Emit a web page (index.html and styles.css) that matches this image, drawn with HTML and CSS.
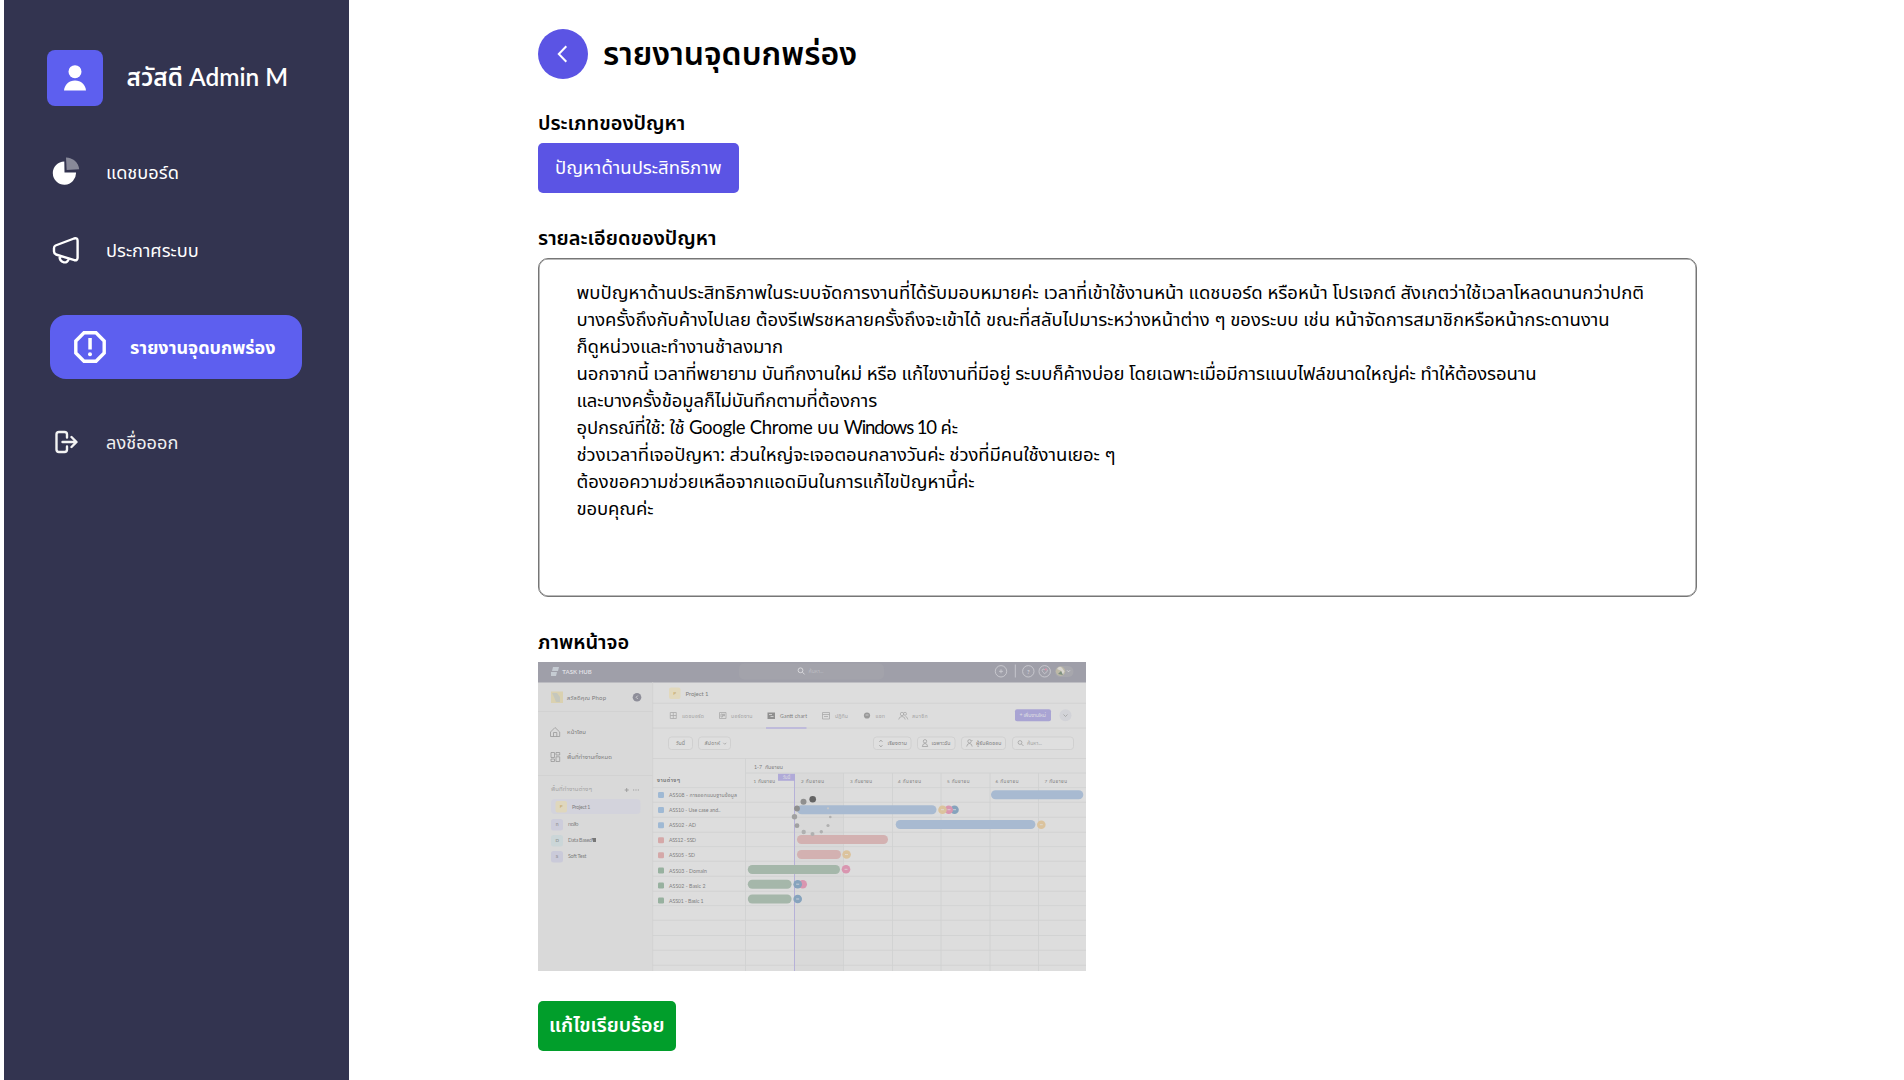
FILE: index.html
```html
<!DOCTYPE html>
<html lang="th">
<head>
<meta charset="utf-8">
<title>รายงานจุดบกพร่อง</title>
<link rel="stylesheet" href="styles.css">
</head>
<body>
<div class="app">
  <aside class="sidebar">
    <div class="profile">
      <span class="avatar"><svg width="22" height="26" viewBox="0 0 22 26"><circle cx="11" cy="6.700" r="6.500" fill="#fff"/><path d="M0 25.500C.6 19.500 5 15.500 11 15.500s10.400 4 11 10z" fill="#fff"/></svg></span>
      <span class="greeting">สวัสดี Admin M</span>
    </div>
    <nav class="menu">
      <a class="item dashboard"><svg class="icon" width="28" height="28" viewBox="0 0 28 28"><path d="M12.300 4.500A11.600 11.600 0 1 0 24 15.600l-11.500-.2z" fill="#fff"/><path d="M14 .6C20.700.8 26.500 5.500 27.200 12.200l-12.500.8z" fill="#fff" opacity=".42"/></svg><span>แดชบอร์ด</span></a>
      <a class="item announce"><svg class="icon" width="28" height="28" viewBox="0 0 28 28" fill="none" stroke="#fff" stroke-width="2.400" stroke-linejoin="round"><path d="M3.500 9.500 22 2.500q3.600-1 3.600 2.200v17.200q-.3 2.900-3.200 2.300L4 18.500Q2 17.500 2 15.500v-3.300q0-2 1.500-2.700zM7.500 19.800c0 8 8.500 8.500 9.200 2.800"/></svg><span>ประกาศระบบ</span></a>
      <a class="item active"><svg class="icon" width="32" height="32" viewBox="0 0 32 32"><path d="M10 1.800h12l8.200 8.200v12L22 30.200H10L1.800 22V10z" fill="none" stroke="#fff" stroke-width="3.400"/><path d="M14.300 7h3.500v11.500h-3.500z" fill="#fff"/><circle cx="16" cy="23.300" r="2" fill="#fff"/></svg><span>รายงานจุดบกพร่อง</span></a>
      <a class="item logout"><svg class="icon" width="24" height="24" viewBox="0 0 24 24" fill="none" stroke="#f3f3f3" stroke-width="2.400" stroke-linecap="round" stroke-linejoin="round"><path d="M13 7.500V4.500Q13 2 10.500 2H5Q2.500 2 2.500 4.500v15Q2.500 22 5 22h5.500q2.500 0 2.500-2.500v-3M8.500 12H22M17.500 7l5 5-5 5"/></svg><span>ลงชื่อออก</span></a>
    </nav>
  </aside>
  <main class="content">
    <header class="head">
      <a class="back"><svg width="50" height="50" viewBox="0 0 50 50"><path d="M28.300 17.200 20.800 25l7.500 7.800" fill="none" stroke="#fff" stroke-width="2"/></svg></a>
      <h1 class="title">รายงานจุดบกพร่อง</h1>
    </header>
    <h2 class="label label-type">ประเภทของปัญหา</h2>
    <div class="tag">ปัญหาด้านประสิทธิภาพ</div>
    <h2 class="label">รายละเอียดของปัญหา</h2>
    <div class="detail">
      <p class="line">พบปัญหาด้านประสิทธิภาพในระบบจัดการงานที่ได้รับมอบหมายค่ะ เวลาที่เข้าใช้งานหน้า แดชบอร์ด หรือหน้า โปรเจกต์ สังเกตว่าใช้เวลาโหลดนานกว่าปกติ</p>
      <p class="line">บางครั้งถึงกับค้างไปเลย ต้องรีเฟรชหลายครั้งถึงจะเข้าได้ ขณะที่สลับไปมาระหว่างหน้าต่าง ๆ ของระบบ เช่น หน้าจัดการสมาชิกหรือหน้ากระดานงาน</p>
      <p class="line">ก็ดูหน่วงและทำงานช้าลงมาก</p>
      <p class="line tight">นอกจากนี้ เวลาที่พยายาม บันทึกงานใหม่ หรือ แก้ไขงานที่มีอยู่ ระบบก็ค้างบ่อย โดยเฉพาะเมื่อมีการแนบไฟล์ขนาดใหญ่ค่ะ ทำให้ต้องรอนาน</p>
      <p class="line tight">และบางครั้งข้อมูลก็ไม่บันทึกตามที่ต้องการ</p>
      <p class="line device">อุปกรณ์ที่ใช้: ใช้ <span class="browser">Google Chrome</span> บน <span class="os">Windows 10</span> ค่ะ</p>
      <p class="line snug">ช่วงเวลาที่เจอปัญหา: ส่วนใหญ่จะเจอตอนกลางวันค่ะ ช่วงที่มีคนใช้งานเยอะ ๆ</p>
      <p class="line snug">ต้องขอความช่วยเหลือจากแอดมินในการแก้ไขปัญหานี้ค่ะ</p>
      <p class="line tight">ขอบคุณค่ะ</p>
    </div>
    <h2 class="label">ภาพหน้าจอ</h2>
    <svg class="shot" width="548" height="309" viewBox="0 0 548 309">
      <rect width="548" height="309" fill="#ddd"/>
      <rect y="20" width="114.700" height="289" fill="#d9d9d9"/>
      <rect width="548" height="20.500" fill="#9f9fa9"/>
      <!-- top bar -->
      <path d="M15 5h6l-1 4h-6zM13 10h6l-1 4h-5z" fill="#c5cbd2"/>
      <text x="24.300" y="12" textLength="29.500" class="s6 lt md">TASK HUB</text>
      <rect x="201" y="1.500" width="145" height="16" rx="5" fill="#a3a3ab"/>
      <g fill="none" stroke="#dcdce0" stroke-width=".9"><circle cx="262.500" cy="8.300" r="2.400"/><path d="m264.500 10.200 2 2.200"/></g>
      <text x="270.500" y="11" textLength="15" class="s5 lt dim">ค้นหา...</text>
      <g fill="none" stroke="#d0d0d6" stroke-width=".8"><circle cx="463" cy="9.300" r="5.700"/><path d="M461 9.300h4M463 7.300v4M477.300 2.500v13"/><circle cx="490.300" cy="9.300" r="5.700"/><circle cx="506.700" cy="9.300" r="5.700"/><path d="M506.700 11.700c-5-3.500-1.500-6 0-3.700 1.500-2.300 5 .2 0 3.700z"/></g>
      <circle cx="507.800" cy="7.600" r="1" fill="#d98aa5"/>
      <text x="488.900" y="11.500" class="s6 lt">?</text>
      <rect x="517" y="4" width="18.500" height="11" rx="5.500" fill="#a7a7ad"/>
      <circle cx="522.500" cy="9.300" r="4.700" fill="#bdb9a6"/><path d="M519 7q3-4 5.500-.5l2 3-2 3.500-1-4z" fill="#d9d6d0"/><path d="M520 12l3-3 2 4z" fill="#7c8f80"/>
      <path d="m529 8.300 1.500 1.500 1.500-1.500" fill="none" stroke="#dcdce0" stroke-width=".8"/>
      <!-- workspace sidebar -->
      <path d="M0 49.500h114.700M0 113.500h114.700" class="rule faint"/>
      <rect x="13" y="29.500" width="12" height="11.500" fill="#dad1b0"/><path d="M14 31h5l3 4v5h-4l-2-5z" fill="#c5c7bd"/>
      <text x="28.700" y="37.500" textLength="39.300" class="s6">สวัสดีคุณ Phop</text>
      <circle cx="99" cy="35.300" r="4.300" fill="#8e8e99"/><path d="m99.800 33.600-1.700 1.700 1.700 1.700" fill="none" stroke="#ddd" stroke-width=".8"/>
      <g fill="none" stroke="#999" stroke-width=".8"><path d="M12.500 70 17 65.500l4.700 4.500v4.500h-9.200zM15.500 74.500V70.500h3.300v4"/><path d="M13 90.500h3.500v5H13zM13 97h3.500v2.500H13zM18 90.500h3.700V93H18zM18 94.800h3.700v4.700H18z"/></g>
      <text x="29" y="72" textLength="19" class="s6">หน้าโฮม</text>
      <text x="29" y="96.700" textLength="45" class="s6">พื้นที่ทำงานทั้งหมด</text>
      <text x="13" y="129" textLength="41" class="s6 dim">พื้นที่ทำงานต่างๆ</text>
      <path d="M86.700 128h4M88.700 126v4M95 128h1.200M97.400 128h1.200M99.800 128h1.200" fill="none" stroke="#999" stroke-width=".9"/>
      <rect x="13" y="137" width="89.500" height="15" rx="4" fill="#d3d3dc"/>
      <rect x="17.500" y="139" width="11.500" height="11.500" rx="2" fill="#dfd7bd"/><text x="21.800" y="146.300" class="s4 gold">P</text>
      <text x="34" y="147" textLength="18.300" class="s5">Project 1</text>
      <rect x="13" y="157" width="12" height="11.500" rx="2.500" fill="#cdcddb"/><text x="17.700" y="164" class="s4">ท</text>
      <rect x="13" y="173" width="12" height="11.500" rx="2.500" fill="#cbd6d8"/><text x="17.500" y="180.200" class="s4">D</text>
      <rect x="13" y="189" width="12" height="11.500" rx="2.500" fill="#cacad9"/><text x="17.700" y="196" class="s4">S</text>
      <text x="30" y="164.300" textLength="10.500" class="s5">ทดสิว</text>
      <text x="30" y="180.300" textLength="24" class="s5">Data Based</text>
      <path d="M54 176h4v4h-3z" fill="#777"/>
      <text x="30" y="196.300" textLength="18.300" class="s5">Soft Test</text>
      <!-- project bar and tabs -->
      <rect x="131" y="25.500" width="11.500" height="11.500" rx="2" fill="#e2d9bd"/><text x="135.200" y="32.900" class="s4 gold">P</text>
      <text x="147.500" y="33.500" textLength="23" class="s6">Project 1</text>
      <path d="M114.700 41.300H548M114.700 66H548M114.700 96.500H548" class="rule faint"/>
      <g fill="none" stroke="#aaa" stroke-width=".8"><path d="M132.300 50.500h6v6h-6zM132.300 53.500h6M135.300 50.500v6M181.500 50.500h6.500v6h-6.500zM183 52h1.500v3H183zM185.500 52h1v2h-1z"/><path d="M284.500 50.500h7v6.500h-7zM284.500 52.500h7M286 54.500h4"/><circle cx="364" cy="52" r="1.700"/><circle cx="367" cy="51.800" r="1.500"/><path d="M360.700 57.500q.5-3 3.300-3 2.900 0 3.200 3M367.500 54.500q2 .3 2.300 3"/></g>
      <path d="M229.500 50.500h7.500v6.500h-7.500z" fill="#8f8f8f"/><path d="M231 52.500h3M232.500 54.500h3" stroke="#ddd" stroke-width=".8"/>
      <circle cx="329" cy="53.500" r="3.100" fill="#999"/><path d="M327.500 53h3" stroke="#ddd" stroke-width=".7"/>
      <text x="144" y="55.700" textLength="22" class="s5 dim">แดชบอร์ด</text>
      <text x="193" y="55.700" textLength="21.500" class="s5 dim">บอร์ดงาน</text>
      <text x="242" y="55.700" textLength="27" class="s5">Gantt chart</text>
      <text x="297" y="55.700" textLength="13" class="s5 dim">ปฏิทิน</text>
      <text x="337.500" y="55.700" textLength="9.500" class="s5 dim">แชท</text>
      <text x="374" y="55.700" textLength="15.500" class="s5 dim">สมาชิก</text>
      <path d="M228 66h40.500" stroke="#b7b2dc" stroke-width="1.500"/>
      <rect x="477" y="47.300" width="36" height="12" rx="2" fill="#a9a4d3"/><text x="481.500" y="55" textLength="26.500" class="s5 lt">+ เพิ่มงานใหม่</text>
      <circle cx="527.500" cy="53.300" r="6" fill="#d2d3d8"/><path d="m525.500 52.500 2 2 2-2" fill="none" stroke="#999" stroke-width=".7"/>
      <!-- toolbar -->
      <g fill="#dfdfdf" stroke="#cdcdcd" stroke-width=".8"><rect x="130.500" y="75" width="24" height="12.500" rx="3"/><rect x="160.500" y="75" width="32" height="12.500" rx="3"/><rect x="335.500" y="75" width="37.500" height="12.500" rx="3"/><rect x="379.500" y="75" width="37.500" height="12.500" rx="3"/><rect x="423.500" y="75" width="44" height="12.500" rx="3"/><rect x="474.500" y="75" width="61" height="12.500" rx="3"/></g>
      <text x="138" y="83.200" textLength="9" class="s5">วันนี้</text><text x="166.500" y="83.200" textLength="15.500" class="s5">สัปดาห์</text>
      <g fill="none" stroke="#999" stroke-width=".7"><path d="m185.300 80.800 1.500 1.500 1.500-1.500M341.300 80l1.600-2 1.600 2M341.300 83l1.600 2 1.600-2"/><circle cx="387" cy="79.300" r="1.700"/><path d="M384.300 84.500q.4-3 2.700-3t2.700 3z"/><circle cx="431.500" cy="79.300" r="1.700"/><path d="M428.700 84.500q.4-3 2.800-3t2.700 3M433.500 78.500h1"/><circle cx="482" cy="80.500" r="1.900"/><path d="m483.500 82 2 2"/></g>
      <text x="349.500" y="83.200" textLength="19.500" class="s5">เรียงตาม</text><text x="393.500" y="83.200" textLength="19" class="s5">เฉพาะฉัน</text><text x="438" y="83.200" textLength="25.500" class="s5">ผู้รับผิดชอบ</text><text x="489" y="83.200" textLength="15" class="s5 dim">ค้นหา...</text>
      <!-- gantt grid -->
      <rect x="256.500" y="111" width="49" height="198" fill="#d9d9d9"/>
      <path d="M207.500 111H548M114.700 125.600H548M114.700 140.300H548M114.700 155.300H548M114.700 170.300H548M114.700 184.600H548M114.700 199.300H548M114.700 214.300H548M114.700 229.300H548M114.700 243.600H548M114.700 258.300H548M114.700 273.500H548M114.700 288.300H548M114.700 303.300H548M114.700 20v289M207.500 96.500V309M305.500 111v198M354.500 111v198M403 111v198M452 111v198M500.500 111v198" class="rule"/>
      <path d="M256.500 112v197" stroke="#b6b1d8" stroke-width="1"/>
      <rect x="240" y="111.800" width="17" height="7" fill="#b0aad8"/><text x="244.500" y="117.200" textLength="7.500" class="s4 lt">วันนี้</text>
      <text x="216" y="106.500" textLength="29" class="s5">1-7&#160; กันยายน</text>
      <text x="119" y="120.300" textLength="23" class="s5 md">งานต่างๆ</text>
      <text x="215.500" y="120.800" textLength="21.500" class="s4">1 กันยายน</text><text x="263" y="120.800" textLength="23" class="s4">2 กันยายน</text><text x="312" y="120.800" textLength="22" class="s4">3 กันยายน</text><text x="360" y="120.800" textLength="23" class="s4">4 กันยายน</text><text x="409" y="120.800" textLength="22.500" class="s4">5 กันยายน</text><text x="457.500" y="120.800" textLength="23" class="s4">6 กันยายน</text><text x="506.500" y="120.800" textLength="22.500" class="s4">7 กันยายน</text>
      <g fill="#9fb9d4"><rect x="120" y="130" width="6" height="6" rx="1.200"/><rect x="120" y="145" width="6" height="6" rx="1.200"/><rect x="120" y="160.300" width="6" height="6" rx="1.200"/></g>
      <g fill="#d5a8a8"><rect x="120" y="175.300" width="6" height="6" rx="1.200"/><rect x="120" y="190.300" width="6" height="6" rx="1.200"/></g>
      <g fill="#97b19f"><rect x="120" y="205.500" width="6" height="6" rx="1.200"/><rect x="120" y="220.500" width="6" height="6" rx="1.200"/><rect x="120" y="235.500" width="6" height="6" rx="1.200"/></g>
      <text x="131" y="135.200" textLength="68" class="s5">ASS08 - การออกแบบฐานข้อมูล</text>
      <text x="131" y="150" textLength="51.500" class="s5">ASS10 - Use case and..</text>
      <text x="131" y="165.200" textLength="27" class="s5">ASS02 - AD</text>
      <text x="131" y="180.300" textLength="27" class="s5">ASS12 - SSD</text>
      <text x="131" y="195.300" textLength="26" class="s5">ASS05 - SD</text>
      <text x="131" y="210.500" textLength="38" class="s5">ASS03 - Domain</text>
      <text x="131" y="225.500" textLength="36.500" class="s5">ASS02 - Basic 2</text>
      <text x="131" y="240.500" textLength="34.500" class="s5">ASS01 - Basic 1</text>
      <g fill="#a8bad1"><rect x="453" y="128.300" width="92.300" height="9" rx="4.500"/><rect x="259" y="143.300" width="139.500" height="9" rx="4.500"/><rect x="357.700" y="158" width="139.700" height="9" rx="4.500"/></g>
      <g fill="#d3b1b1"><rect x="259" y="173" width="91" height="9" rx="4.500"/><rect x="259" y="188" width="44" height="9" rx="4.500"/></g>
      <g fill="#a5b7aa"><rect x="209.800" y="203" width="92.200" height="9" rx="4.500"/><rect x="209.800" y="217.700" width="43.800" height="9" rx="4.500"/><rect x="209.800" y="232.500" width="43.800" height="9" rx="4.500"/></g>
      <circle cx="416.500" cy="147.700" r="4.300" fill="#86a3bd"/><circle cx="410.700" cy="147.700" r="4.300" fill="#d996b0"/><circle cx="404.500" cy="147.700" r="4.300" fill="#dbc39d"/>
      <circle cx="503.300" cy="162.700" r="4.300" fill="#dbc39d"/><circle cx="308.600" cy="192.500" r="4.300" fill="#dbc39d"/><circle cx="308" cy="207.300" r="4.300" fill="#d996b0"/>
      <circle cx="264.700" cy="222.200" r="4.300" fill="#d996b0"/><circle cx="259.700" cy="222.200" r="4.300" fill="#86a3bd"/><circle cx="259.700" cy="237" r="4.300" fill="#86a3bd"/>
      <path d="M403 147.700h3M409.500 147.700h3M415 147.700h3M501.800 162.700h3M307 192.500h3M306.500 207.300h3M258.200 222.200h3M258.200 237h3" stroke="#e2e2e2" stroke-width="1" opacity=".7"/>
      <!-- loading spinner -->
      <circle cx="274.700" cy="137.300" r="3.300" fill="#646464"/><g fill="#8f8f8f"><circle cx="265.500" cy="139.700" r="3"/><circle cx="259" cy="146.500" r="2.900"/></g><g fill="#a0a0a0"><circle cx="256.500" cy="154.700" r="2.700"/><circle cx="259" cy="163.700" r="2.400"/></g><g fill="#b0b0b0"><circle cx="265.700" cy="170" r="2.200"/><circle cx="274.500" cy="172" r="2"/><circle cx="283.300" cy="169.700" r="1.700"/><circle cx="290" cy="163.500" r="1.600"/><circle cx="292.300" cy="155" r="1.300"/></g><circle cx="290" cy="146.300" r="1.100" fill="#c8c8c8"/>
    </svg>
    <button class="done">แก้ไขเรียบร้อย</button>
  </main>
</div>
</body>
</html>
```
FILE: styles.css
```css
* { box-sizing: border-box; }

body {
  margin: 0;
  background: #fff;
  color: #000;
  font-family: Lato, "Noto Sans Thai", "Noto Sans", sans-serif;
  font-size: 18.5px;
}

.app { display: flex; height: 1080px; overflow: hidden; white-space: nowrap; }

/* Sidebar */
.sidebar { width: 345px; margin-left: 4px; padding-top: 50px; background: #333450; color: #fff; }
.profile { display: flex; align-items: center; height: 56px; padding-left: 43px; gap: 23.5px; }
.avatar { display: flex; align-items: center; justify-content: center; width: 56px; height: 56px; border-radius: 8px; background: #5d5fef; }
.greeting { padding-bottom: 2px; font-size: 24.4px; font-weight: 600; line-height: 54px; }
.menu { display: flex; flex-direction: column; padding-top: 46px; font-size: 18.2px; line-height: 40px; }
.item { display: flex; align-items: center; height: 40px; padding-left: 48px; gap: 26px; }
.dashboard .icon { margin-bottom: 3px; }
.announce { margin-top: 38px; }
.active { height: 64px; width: 252px; margin: 45px 0 43px 46px; padding: 0 0 1px 24px; gap: 24px; border-radius: 16px; background: #5d5fef; font-size: 18px; font-weight: 700; }
.logout { padding-left: 50px; gap: 28px; color: #f0f0f0; }

/* Report */
.content { display: flex; flex-direction: column; align-items: flex-start; padding: 29px 0 0 189px; }
.head { display: flex; align-items: center; height: 50px; gap: 15px; }
.back { width: 50px; height: 50px; border-radius: 50%; background: #5b54e4; }
.title { margin: 0; padding-bottom: 2px; font-size: 32px; font-weight: 600; line-height: 48px; }
.label { margin: 29px 0 6px; font-size: 20px; font-weight: 600; line-height: 30px; }
.label-type { margin-top: 28px; }
.tag { height: 50px; width: 201px; padding-left: 17px; border-radius: 5px; background: #5b54e4; color: #fff; line-height: 49px; }
.detail { width: 1159px; height: 339px; padding: 20px 0 0 37.5px; border: 1px solid #767676; border-radius: 10px; box-shadow: inset 0 0 0 .5px #767676; }
.line { margin: 0; line-height: 27px; }
.tight { letter-spacing: -.1px; }
.snug { letter-spacing: -.06px; }
.device { letter-spacing: -.17px; }
.browser { letter-spacing: -.3px; }
.os { letter-spacing: -1.1px; }
.done { width: 138px; height: 50px; margin: 30px 0 0; padding: 0 0 2px 11px; border: 0; border-radius: 5px; background: #019e2b; color: #fff; font: 600 19.7px/48px Lato, "Noto Sans Thai", sans-serif; text-align: left; }

/* Attached screenshot */
.shot { display: block; }
.shot text { fill: #7d7d7d; font-family: Lato, "Noto Sans Thai", sans-serif; }
.shot .s4 { font-size: 4.6px; }
.shot .s5 { font-size: 5.2px; }
.shot .s6 { font-size: 6px; }
.shot .md { font-weight: 700; }
.shot .dim { fill: #a3a3a3; }
.shot .gold { fill: #c2a35f; }
.shot .lt { fill: #dedee2; }
.shot .lt.dim { fill: #bdbdc4; }
.rule { fill: none; stroke: #cfd0d0; stroke-width: .8; }
.faint { stroke: #d1d1d1; }
```
